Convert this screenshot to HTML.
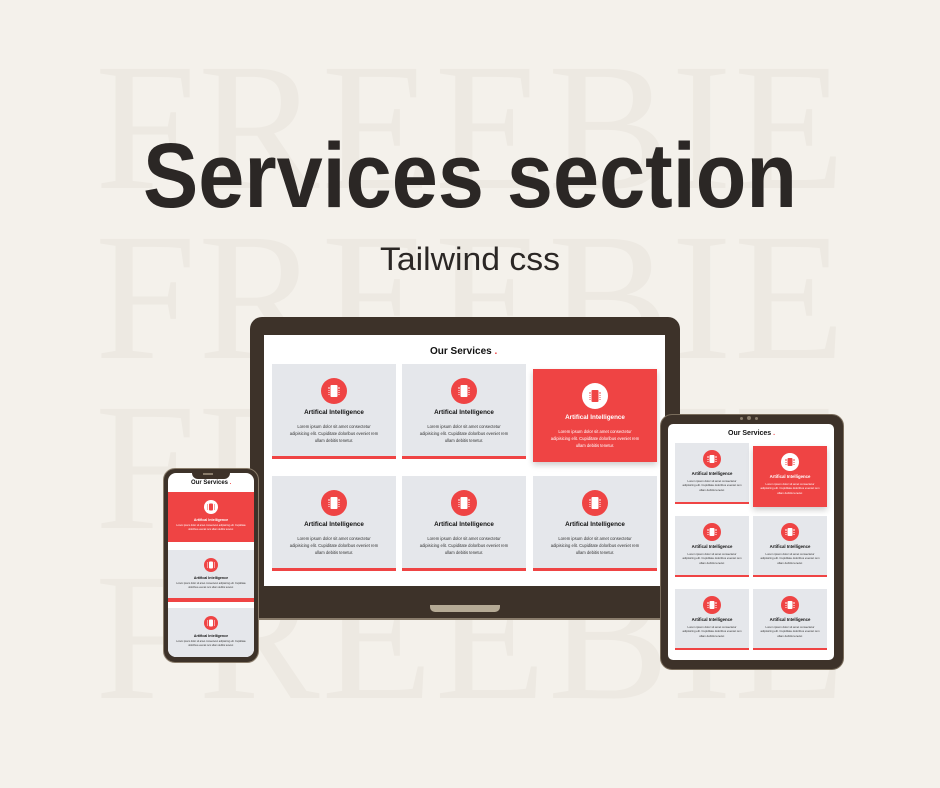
<!DOCTYPE html>
<html><head><meta charset="utf-8"><style>
*{margin:0;padding:0;box-sizing:border-box}
body{width:940px;height:788px;background:#f4f1eb;position:relative;overflow:hidden;font-family:"Liberation Sans",sans-serif}
.abs{position:absolute}
.card{position:absolute;background:#e5e7eb;text-align:center;color:#111}
.card .bar{position:absolute;left:0;right:0;bottom:0;background:#ef4444}
.card .ic{position:absolute;left:50%;border-radius:50%;background:#ef4444;transform:translateX(-50%)}
.card .ic i{position:absolute;left:50%;top:50%;transform:translate(-50%,-50%);background:#fff;border-radius:1px}
.card .ic i:before,.card .ic i:after{content:"";position:absolute;top:15%;bottom:15%;border-left:1px dotted #fff}
.card .ic i:before{left:-2px}.card .ic i:after{right:-2px}
.card .t{position:absolute;left:0;right:0;font-weight:bold;white-space:nowrap}
.card .p{position:absolute;left:13%;right:13%;color:#333}
.card.hi{background:#ef4444;color:#fff;box-shadow:0 3px 6px rgba(0,0,0,.2)}
.card.hi .ic{background:#fff}.card.hi .ic i{background:#ef4444}
.card.hi .ic i:before,.card.hi .ic i:after{border-color:#ef4444}
.card.hi .p{color:#fff}.card.hi .bar{display:none}
.L{width:124px;height:95px}.L .bar{height:3px}
.L .ic{top:14px;width:26px;height:26px}.L .ic i{width:7px;height:12px}
.L .t{top:45px;font-size:6.3px}.L .p{top:59px;font-size:4.2px;line-height:7px}
.T{width:74px;height:61px}.T .bar{height:2px}
.T .ic{top:7px;width:18px;height:18px}.T .ic i{width:5px;height:8px}
.T .t{top:28px;font-size:4.3px}.T .p{top:36px;font-size:2.8px;line-height:4.3px;left:10%;right:10%}
.P{width:86px;height:50px}.P .bar{height:4px}
.P .ic{top:8px;width:14px;height:14px}.P .ic i{width:4px;height:7px}
.P .t{top:26px;font-size:3.6px}.P .p{top:32px;font-size:2.4px;line-height:3.6px;left:4%;right:4%}
.h{position:absolute;font-weight:bold;color:#111;white-space:nowrap}
.h b{color:#ef4444}
</style></head><body>
<svg class="abs" style="left:0;top:0" width="940" height="788">
<g fill="#ede9e2" font-family="Liberation Serif,serif" font-size="182">
<text x="95" y="188" textLength="750" lengthAdjust="spacing">FREEBIE</text>
<text x="95" y="358" textLength="750" lengthAdjust="spacing">FREEBIE</text>
<text x="95" y="528" textLength="750" lengthAdjust="spacing">FREEBIE</text>
<text x="95" y="698" textLength="750" lengthAdjust="spacing">FREEBIE</text>
</g>
<text x="143" y="207" font-family="Liberation Sans,sans-serif" font-weight="bold" font-size="92" fill="#2b2725" textLength="654" lengthAdjust="spacingAndGlyphs">Services section</text>
<text x="380" y="270" font-family="Liberation Sans,sans-serif" font-size="32" fill="#2b2725" textLength="180" lengthAdjust="spacingAndGlyphs">Tailwind css</text>
</svg>

<div class="abs" style="left:250px;top:317px;width:430px;height:303px;background:#3d3229;border-radius:12px 12px 2px 2px;border-bottom:2px solid #8a7d6c"></div>
<div class="abs" style="left:264px;top:335px;width:401px;height:251px;background:#fff"></div>
<div class="abs" style="left:430px;top:605px;width:70px;height:7px;background:#b5aa95;border-radius:0 0 5px 5px"></div>
<div class="h" style="left:430px;top:346px;font-size:10px">Our Services <b>.</b></div>

<div class="card L" style="left:272px;top:364px"><div class="ic"><i></i></div><div class="t">Artifical Intelligence</div><div class="p">Lorem ipsum dolor sit amet consectetur adipisicing elit. Cupiditate doloribus eveniet rem ullam debitis tenetur.</div><div class="bar"></div></div>
<div class="card L" style="left:402px;top:364px"><div class="ic"><i></i></div><div class="t">Artifical Intelligence</div><div class="p">Lorem ipsum dolor sit amet consectetur adipisicing elit. Cupiditate doloribus eveniet rem ullam debitis tenetur.</div><div class="bar"></div></div>
<div class="card L hi" style="left:533px;top:369px;height:93px"><div class="ic"><i></i></div><div class="t">Artifical Intelligence</div><div class="p">Lorem ipsum dolor sit amet consectetur adipisicing elit. Cupiditate doloribus eveniet rem ullam debitis tenetur.</div><div class="bar"></div></div>
<div class="card L" style="left:272px;top:476px"><div class="ic"><i></i></div><div class="t">Artifical Intelligence</div><div class="p">Lorem ipsum dolor sit amet consectetur adipisicing elit. Cupiditate doloribus eveniet rem ullam debitis tenetur.</div><div class="bar"></div></div>
<div class="card L" style="left:402px;top:476px"><div class="ic"><i></i></div><div class="t">Artifical Intelligence</div><div class="p">Lorem ipsum dolor sit amet consectetur adipisicing elit. Cupiditate doloribus eveniet rem ullam debitis tenetur.</div><div class="bar"></div></div>
<div class="card L" style="left:533px;top:476px"><div class="ic"><i></i></div><div class="t">Artifical Intelligence</div><div class="p">Lorem ipsum dolor sit amet consectetur adipisicing elit. Cupiditate doloribus eveniet rem ullam debitis tenetur.</div><div class="bar"></div></div>

<div class="abs" style="left:660px;top:414px;width:184px;height:256px;background:#3d3229;border-radius:12px;border:1px solid #7a6d5c"></div>
<div class="abs" style="left:740px;top:417px;width:3px;height:3px;border-radius:50%;background:#8a7d6c"></div>
<div class="abs" style="left:747px;top:416px;width:4px;height:4px;border-radius:50%;background:#8a7d6c"></div>
<div class="abs" style="left:755px;top:417px;width:3px;height:3px;border-radius:50%;background:#8a7d6c"></div>
<div class="abs" style="left:668px;top:424px;width:166px;height:236px;background:#fff;border-radius:5px"></div>
<div class="h" style="left:728px;top:430px;font-size:7px">Our Services <b>.</b></div>
<div class="card T" style="left:675px;top:443px"><div class="ic"><i></i></div><div class="t">Artifical Intelligence</div><div class="p">Lorem ipsum dolor sit amet consectetur adipisicing elit. Cupiditate doloribus eveniet rem ullam debitis tenetur.</div><div class="bar"></div></div>
<div class="card T hi" style="left:753px;top:446px"><div class="ic"><i></i></div><div class="t">Artifical Intelligence</div><div class="p">Lorem ipsum dolor sit amet consectetur adipisicing elit. Cupiditate doloribus eveniet rem ullam debitis tenetur.</div><div class="bar"></div></div>
<div class="card T" style="left:675px;top:516px"><div class="ic"><i></i></div><div class="t">Artifical Intelligence</div><div class="p">Lorem ipsum dolor sit amet consectetur adipisicing elit. Cupiditate doloribus eveniet rem ullam debitis tenetur.</div><div class="bar"></div></div>
<div class="card T" style="left:753px;top:516px"><div class="ic"><i></i></div><div class="t">Artifical Intelligence</div><div class="p">Lorem ipsum dolor sit amet consectetur adipisicing elit. Cupiditate doloribus eveniet rem ullam debitis tenetur.</div><div class="bar"></div></div>
<div class="card T" style="left:675px;top:589px"><div class="ic"><i></i></div><div class="t">Artifical Intelligence</div><div class="p">Lorem ipsum dolor sit amet consectetur adipisicing elit. Cupiditate doloribus eveniet rem ullam debitis tenetur.</div><div class="bar"></div></div>
<div class="card T" style="left:753px;top:589px"><div class="ic"><i></i></div><div class="t">Artifical Intelligence</div><div class="p">Lorem ipsum dolor sit amet consectetur adipisicing elit. Cupiditate doloribus eveniet rem ullam debitis tenetur.</div><div class="bar"></div></div>

<div class="abs" style="left:163px;top:468px;width:96px;height:195px;background:#3d3229;border-radius:12px;border:1px solid #8a7d6c"></div>
<div class="abs" style="left:168px;top:473px;width:86px;height:184px;background:#fff;border-radius:8px;overflow:hidden">
  <div class="card P hi" style="left:0;top:19px;box-shadow:none"><div class="ic"><i></i></div><div class="t">Artifical Intelligence</div><div class="p">Lorem ipsum dolor sit amet consectetur adipisicing elit. Cupiditate doloribus eveniet rem ullam debitis tenetur.</div></div>
  <div class="card P" style="left:0;top:77px;height:52px"><div class="ic"><i></i></div><div class="t">Artifical Intelligence</div><div class="p">Lorem ipsum dolor sit amet consectetur adipisicing elit. Cupiditate doloribus eveniet rem ullam debitis tenetur.</div><div class="bar"></div></div>
  <div class="card P" style="left:0;top:135px;height:52px"><div class="ic"><i></i></div><div class="t">Artifical Intelligence</div><div class="p">Lorem ipsum dolor sit amet consectetur adipisicing elit. Cupiditate doloribus eveniet rem ullam debitis tenetur.</div></div>
</div>
<div class="abs" style="left:192px;top:472px;width:38px;height:7px;background:#3d3229;border-radius:0 0 6px 6px"></div>
<div class="abs" style="left:203px;top:473px;width:10px;height:1.5px;background:#8a7d6c"></div>
<div class="h" style="left:191px;top:480px;font-size:6px">Our Services <b>.</b></div>
</body></html>
